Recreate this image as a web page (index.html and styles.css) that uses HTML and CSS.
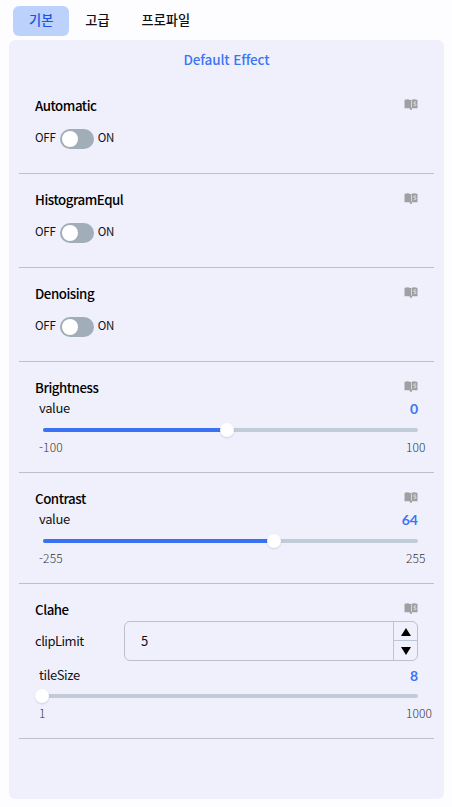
FILE: index.html
```html
<!DOCTYPE html>
<html lang="ko">
<head>
<meta charset="utf-8">
<title>Effects</title>
<link rel="stylesheet" href="styles.css">
</head>
<body>
<svg class="defs" width="0" height="0"><symbol id="book" viewBox="0 0 14 11"><path fill="#a0a0a2" d="M.5 1Q3.5-.3 6.3 1V9.3H.5zM7.2 1Q10-.3 13.5 1V9.3H7.2zM5.8 9H8v1.7H5.8z"/><path fill="#a0a0a2" d="M6 1h1.5v8.3H6z"/><path fill="none" stroke="#e3e3ec" stroke-width=".8" d="M7.5 1.5v7M12 2.7L9.9 3.3v1.1L12 5v1.1L9.8 6.7"/></symbol></svg>
<nav class="tabs">
  <button class="tab active">기본</button><button class="tab">고급</button><button class="tab">프로파일</button>
</nav>
<main class="panel">
  <h1 class="heading">Default Effect</h1>
  <section class="effect">
    <div class="title"><span>Automatic</span><svg class="book"><use href="#book"/></svg></div>
    <div class="switch-row"><span>OFF</span><i class="switch"></i><span>ON</span></div>
  </section>
  <section class="effect">
    <div class="title"><span>HistogramEqul</span><svg class="book"><use href="#book"/></svg></div>
    <div class="switch-row"><span>OFF</span><i class="switch"></i><span>ON</span></div>
  </section>
  <section class="effect">
    <div class="title"><span>Denoising</span><svg class="book"><use href="#book"/></svg></div>
    <div class="switch-row"><span>OFF</span><i class="switch"></i><span>ON</span></div>
  </section>
  <section class="effect slider-effect">
    <div class="title"><span>Brightness</span><svg class="book"><use href="#book"/></svg></div>
    <div class="value-row"><span>value</span><b>0</b></div>
    <div class="rail"><div class="fill" style="width:184px"><i class="thumb"></i></div></div>
    <div class="limits"><span>-100</span><span class="max">100</span></div>
  </section>
  <section class="effect slider-effect">
    <div class="title"><span>Contrast</span><svg class="book"><use href="#book"/></svg></div>
    <div class="value-row"><span>value</span><b>64</b></div>
    <div class="rail"><div class="fill" style="width:231px"><i class="thumb"></i></div></div>
    <div class="limits"><span>-255</span><span class="max">255</span></div>
  </section>
  <section class="effect clahe">
    <div class="title"><span>Clahe</span><svg class="book"><use href="#book"/></svg></div>
    <div class="number-row"><span class="name">clipLimit</span>
      <div class="number"><span>5</span><div class="steps">
        <button><svg width="10" height="8" viewBox="0 0 10 8"><path d="M0 8 5 0 10 8z"/></svg></button>
        <button><svg width="10" height="8" viewBox="0 0 10 8"><path d="M0 0H10L5 8z"/></svg></button>
      </div></div>
    </div>
    <div class="value-row"><span>tileSize</span><b>8</b></div>
    <div class="rail"><div class="fill" style="width:0px"><i class="thumb"></i></div></div>
    <div class="limits"><span>1</span><span class="max">1000</span></div>
  </section>
</main>
</body>
</html>
```
FILE: styles.css
```css
* { box-sizing: border-box; }
body { margin: 0; width: 452px; height: 807px; overflow: hidden; background: #fdfdff; color: #111; font: 400 13px/20px "Noto Sans CJK KR", sans-serif; }
button { font: inherit; color: inherit; border: 0; background: none; padding: 0; }
.defs { position: absolute; }
.tabs { display: flex; height: 40px; padding: 6px 0 0 13px; }
.tab { height: 30px; padding: 0 16px 2px; border-radius: 6px; font-weight: 500; font-size: 13.2px; line-height: 28px; white-space: nowrap; }
.tab.active { background: #bcd1fb; color: #1b55e2; }
.panel { width: 435px; height: 759px; margin-left: 9px; padding: 0 10px; border-radius: 6px; background: #f0f0fd; }
.heading { height: 40px; margin: 0; font-size: 13.5px; font-weight: 500; line-height: 39px; text-align: center; letter-spacing: -.12px; color: #3b76f3; }
.effect { height: 94px; padding: 15px 16px 0; border-bottom: 1px solid #bfbfcc; }
.slider-effect { height: 111px; }
.clahe { height: 155px; }
.title { display: flex; justify-content: space-between; height: 20px; font-size: 13.3px; line-height: 22px; font-weight: 500; letter-spacing: -.46px; color: #000; }
.book { width: 14px; height: 11px; margin-top: 4px; }
.switch-row { display: flex; align-items: center; height: 20px; margin-top: 14px; font-size: 11.5px; letter-spacing: -.2px; }
.switch-row span { line-height: 16px; height: 20px; }
.switch { width: 34px; height: 20px; margin: 0 3.5px 0 4.5px; border-radius: 10px; padding: 2px; background: #a1adb8; }
.switch::before { content: ""; display: block; width: 16px; height: 16px; border-radius: 50%; background: #fff; }
.value-row { display: flex; justify-content: space-between; height: 20px; padding-left: 4px; line-height: 22px; letter-spacing: -.35px; }
.value-row b { color: #3b76f3; font: 700 14px/24px Lato, sans-serif; letter-spacing: 0; }
.rail { height: 4px; margin: 11px 0 0 8px; border-radius: 2px; background: #c1ccd8; }
.fill { position: relative; height: 4px; border-radius: 2px; background: #3872f2; }
.thumb { position: absolute; right: -7px; top: -5px; width: 14px; height: 14px; border-radius: 50%; background: #fff; box-shadow: 0 1px 2px #0002; }
.limits { display: flex; justify-content: space-between; height: 20px; margin-top: 5px; padding-left: 4px; font-size: 12px; font-weight: 300; letter-spacing: .1px; color: #333; }
.max { width: 12px; white-space: nowrap; }
.number-row { display: flex; justify-content: space-between; height: 40px; margin-top: 2px; line-height: 39px; }
.name { letter-spacing: -.5px; }
.number { display: flex; width: 294px; height: 40px; padding-left: 16px; justify-content: space-between; border: 1px solid #bfbfcc; border-radius: 6px; line-height: 38px; }
.steps { display: grid; grid-template-rows: 18px 20px; width: 24px; border-left: 1px solid #bcc6d2; }
.steps button { display: grid; place-items: center; }
.steps button:first-child { padding-top: 2px; }
.steps button + button { border-top: 1px solid #bcc6d2; }
.clahe .value-row { margin-top: 4px; line-height: 20px; }
.clahe .value-row b { line-height: 21px; }
.clahe .rail { margin-top: 9px; }
.clahe .thumb { right: -6px; }
```
